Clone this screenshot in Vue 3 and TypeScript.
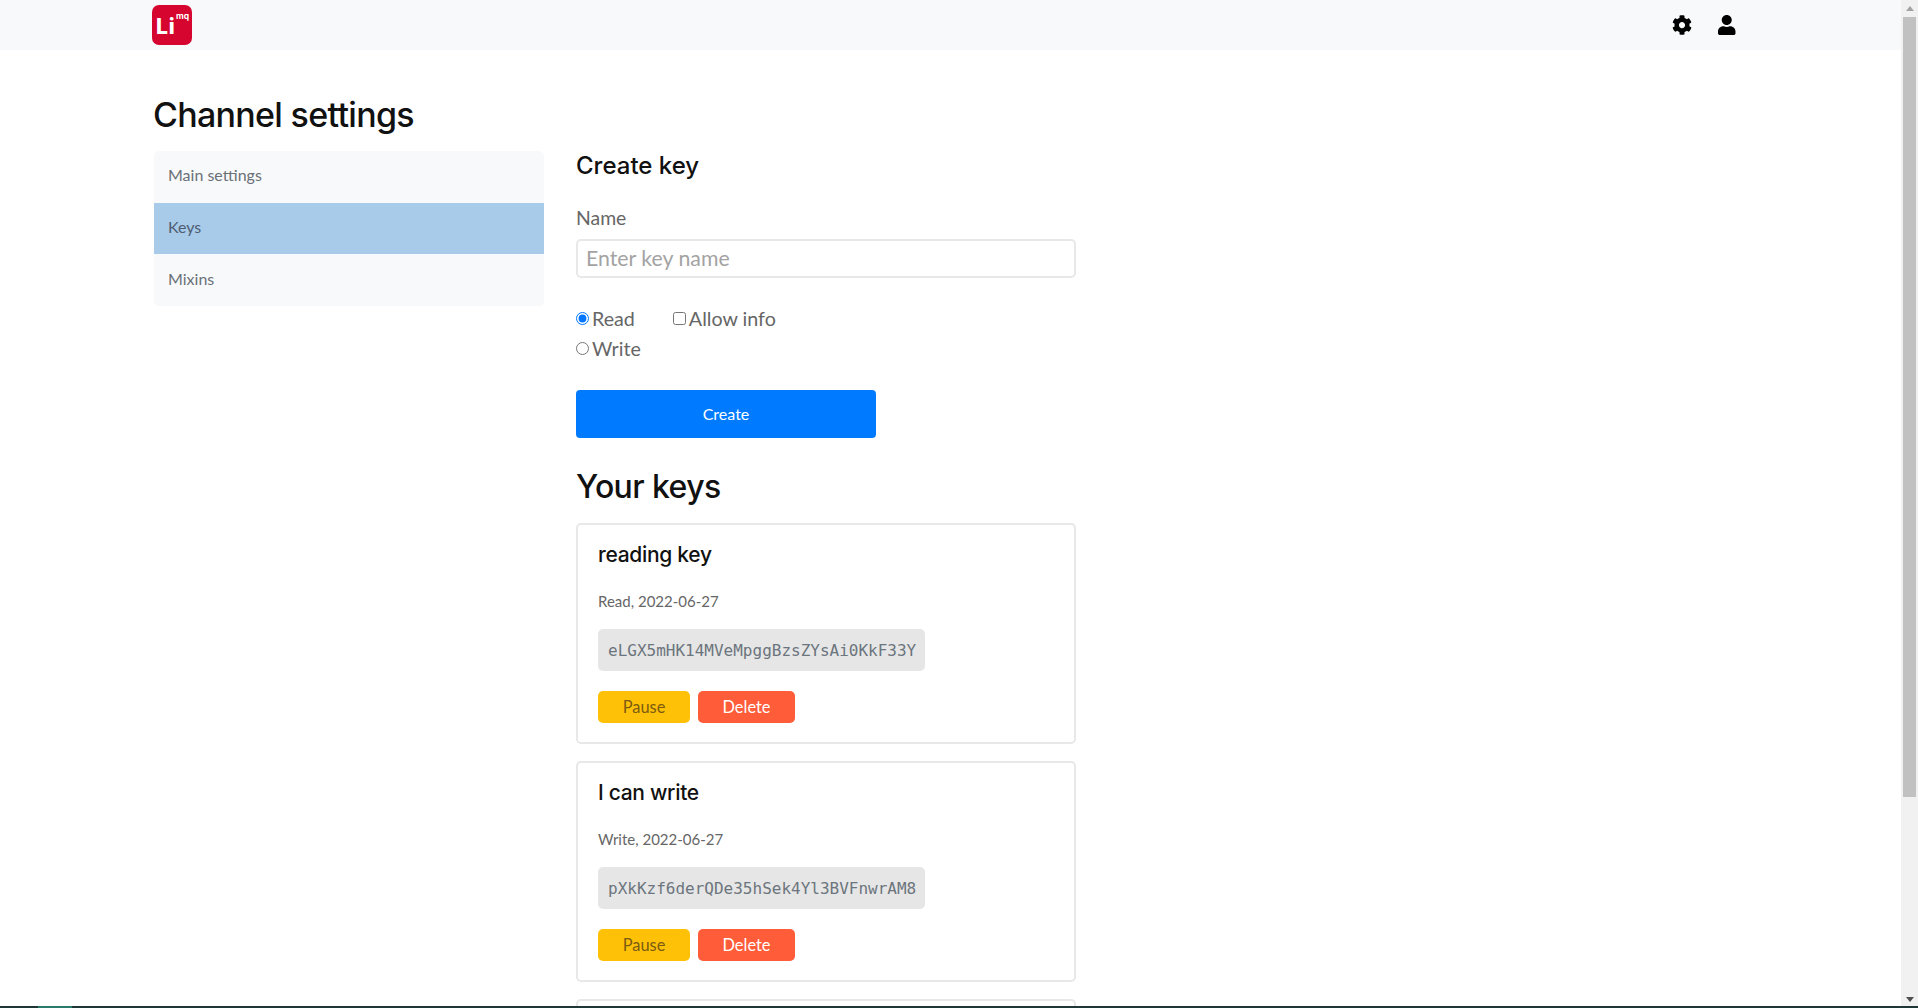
<script setup lang="ts">
interface KeyItem {
  name: string
  meta: string
  token: string
}

const navItems = [
  { label: 'Main settings', active: false },
  { label: 'Keys', active: true },
  { label: 'Mixins', active: false },
]

const keys: KeyItem[] = [
  { name: 'reading key', meta: 'Read, 2022-06-27', token: 'eLGX5mHK14MVeMpggBzsZYsAi0KkF33Y' },
  { name: 'I can write', meta: 'Write, 2022-06-27', token: 'pXkKzf6derQDe35hSek4Yl3BVFnwrAM8' },
]
</script>

<template>
  <div class="window">
    <div class="viewport">
      <div class="page">
        <header class="topbar">
          <svg class="logo" viewBox="0 0 40 40" aria-label="Limq logo">
            <rect width="40" height="40" rx="7" fill="#d6052f" />
            <text x="4" y="29" class="logo-li">Li</text>
            <text x="24" y="14" class="logo-mq">mq</text>
          </svg>
          <div class="top-icons">
            <svg class="gear" viewBox="0 0 512 512" aria-hidden="true">
              <path d="M487.4 315.7l-42.6-24.6c4.3-23.2 4.3-47 0-70.2l42.6-24.6c4.9-2.8 7.1-8.6 5.5-14-11.1-35.6-30-67.8-54.7-94.6-3.8-4.1-10-5.1-14.8-2.3L380.8 110c-17.9-15.4-38.5-27.3-60.8-35.1V25.8c0-5.6-3.9-10.5-9.4-11.7-36.7-8.2-74.3-7.8-109.2 0-5.5 1.2-9.4 6.1-9.4 11.7V75c-22.2 7.9-42.8 19.8-60.8 35.1L88.7 85.5c-4.9-2.8-11-1.9-14.8 2.3-24.7 26.7-43.6 58.9-54.7 94.6-1.7 5.4.6 11.2 5.5 14L67.3 221c-4.3 23.2-4.3 47 0 70.2l-42.6 24.6c-4.9 2.8-7.1 8.6-5.5 14 11.1 35.6 30 67.8 54.7 94.6 3.8 4.1 10 5.1 14.8 2.3l42.6-24.6c17.9 15.4 38.5 27.3 60.8 35.1v49.2c0 5.6 3.9 10.5 9.4 11.7 36.7 8.2 74.3 7.8 109.2 0 5.5-1.2 9.4-6.1 9.4-11.7v-49.2c22.2-7.9 42.8-19.8 60.8-35.1l42.6 24.6c4.9 2.8 11 1.9 14.8-2.3 24.7-26.7 43.6-58.9 54.7-94.6 1.5-5.5-.7-11.3-5.6-14.1zM256 336c-44.1 0-80-35.9-80-80s35.9-80 80-80 80 35.9 80 80-35.9 80-80 80z" />
            </svg>
            <svg class="user" viewBox="0 0 448 512" aria-hidden="true">
              <path d="M224 256c70.7 0 128-57.3 128-128S294.7 0 224 0 96 57.3 96 128s57.3 128 128 128zm89.6 32h-16.7c-22.2 10.2-46.9 16-72.9 16s-50.6-5.8-72.9-16h-16.7C60.2 288 0 348.2 0 422.4V464c0 26.5 21.5 48 48 48h352c26.5 0 48-21.5 48-48v-41.6c0-74.2-60.2-134.4-134.4-134.4z" />
            </svg>
          </div>
        </header>

        <main class="content">
          <h1 class="title">Channel settings</h1>
          <div class="columns">
            <nav class="side">
              <a v-for="item in navItems" :key="item.label" class="side-item" :class="{ active: item.active }">{{ item.label }}</a>
            </nav>
            <section class="form-col">
              <h2 class="create-title">Create key</h2>
              <label class="name-label">Name</label>
              <input class="name-input" type="text" placeholder="Enter key name" />
              <div class="options">
                <div class="option-col">
                  <label class="opt"><input type="radio" name="mode" checked />Read</label>
                  <label class="opt"><input type="radio" name="mode" />Write</label>
                </div>
                <label class="opt"><input type="checkbox" />Allow info</label>
              </div>
              <button class="create-btn" type="button">Create</button>
              <h2 class="keys-title">Your keys</h2>
              <article v-for="k in keys" :key="k.token" class="card">
                <h3 class="card-title">{{ k.name }}</h3>
                <p class="card-meta">{{ k.meta }}</p>
                <code class="token">{{ k.token }}</code>
                <div class="actions">
                  <button class="btn pause" type="button">Pause</button>
                  <button class="btn del" type="button">Delete</button>
                </div>
              </article>
              <article class="card"></article>
            </section>
          </div>
        </main>
      </div>
      <div class="scrollbar" aria-hidden="true">
        <span class="arrow up"></span>
        <div class="track"><div class="thumb"></div></div>
        <span class="arrow down"></span>
      </div>
    </div>
    <div class="strip"><span class="strip-tab"></span></div>
  </div>
</template>

<style>
html,
body {
  margin: 0;
  overflow: hidden;
  background: #fff;
}
</style>

<style scoped>
.window {
  width: 1918px;
  height: 1008px;
  display: flex;
  flex-direction: column;
  overflow: hidden;
  font-family: Lato, "Noto Sans", sans-serif;
  color: #495057;
}
.viewport {
  flex: 1;
  min-height: 0;
  display: flex;
}
.page {
  flex: 1;
  min-width: 0;
  overflow: hidden;
}
.topbar {
  height: 50px;
  background: #f8f9fa;
  display: flex;
  align-items: center;
  justify-content: space-between;
  padding: 0 165.5px 0 152px;
}
.logo {
  width: 40px;
  height: 40px;
}
.logo-li {
  font: 800 21px Inter, sans-serif;
  letter-spacing: 1px;
  fill: #fff;
}
.logo-mq {
  font: 700 8.5px Inter, sans-serif;
  fill: #fff;
}
.top-icons {
  display: flex;
  align-items: center;
  gap: 26px;
}
.gear {
  width: 20px;
  height: 20px;
  display: block;
}
.user {
  width: 17.5px;
  height: 20px;
  display: block;
}
.content {
  padding-left: 154px;
}
.title {
  margin: 0 0 0 -1px;
  padding-top: 42px;
  height: 59px;
  font: 500 34px/46px Inter, sans-serif;
  letter-spacing: -0.7px;
  color: #111;
}
.columns {
  display: flex;
  gap: 32px;
  align-items: flex-start;
}
.side {
  width: 390px;
  flex: none;
  display: flex;
  flex-direction: column;
  border-radius: 5px;
  overflow: hidden;
  background: #f8f9fa;
}
.side-item {
  box-sizing: border-box;
  height: 51.7px;
  display: flex;
  align-items: center;
  padding: 0 0 4px 14px;
  font-size: 16px;
  color: #6a7077;
}
.side-item.active {
  background: #a8cbe9;
  color: #4f5d73;
}
.form-col {
  width: 500px;
  flex: none;
  display: flex;
  flex-direction: column;
  align-items: flex-start;
}
.create-title {
  margin: 0;
  height: 52px;
  font: 500 24px/29px Inter, sans-serif;
  color: #111;
}
.name-label {
  height: 36px;
  font-size: 19.4px;
  line-height: 30px;
  color: #666;
}
.name-input {
  box-sizing: border-box;
  width: 100%;
  height: 39px;
  border: 2px solid #e8e8e8;
  border-radius: 5px;
  padding: 0 8px 2px;
  font-family: inherit;
  font-size: 21.3px;
  outline: none;
}
.name-input::placeholder {
  color: #a3a3a3;
}
.options {
  display: flex;
  gap: 32px;
  margin-top: 25px;
  align-items: flex-start;
}
.option-col {
  display: flex;
  flex-direction: column;
}
.opt {
  height: 30px;
  display: flex;
  align-items: center;
  gap: 3px;
  font-size: 19.7px;
  color: #666;
}
.opt input {
  margin: 1px 0 0;
}
.create-btn {
  width: 300px;
  height: 48px;
  margin-top: 27px;
  padding: 0 0 2px;
  border: 0;
  border-radius: 4px;
  background: #007bff;
  color: #fff;
  font-family: inherit;
  font-size: 16px;
}
.keys-title {
  margin: 0;
  padding-top: 29px;
  height: 56px;
  font: 500 32px/39px Inter, sans-serif;
  letter-spacing: -0.6px;
  color: #111;
  box-sizing: content-box;
}
.card {
  box-sizing: border-box;
  width: 100%;
  height: 221px;
  margin-bottom: 17px;
  border: 2px solid #e8e8e8;
  border-radius: 5px;
  padding: 16px 20px 0;
  flex: none;
}
.card-title {
  margin: 0;
  font: 500 21px/28px Inter, sans-serif;
  letter-spacing: -0.3px;
  color: #111;
}
.card-meta {
  margin: 22px 0 0;
  font-size: 15px;
  line-height: 20px;
  color: #666;
}
.token {
  display: block;
  width: 327px;
  box-sizing: border-box;
  height: 42px;
  margin-top: 18px;
  padding: 0 10px;
  border-radius: 5px;
  background: #e6e6e6;
  color: #6c757d;
  font: 16px/44px "DejaVu Sans Mono", monospace;
}
.actions {
  display: flex;
  gap: 8px;
  margin-top: 20px;
}
.btn {
  height: 32px;
  border: 0;
  border-radius: 5px;
  font-family: inherit;
  font-size: 16.4px;
  padding: 0 0 1px;
}
.pause {
  width: 92px;
  background: #ffc107;
  color: #7a5b10;
}
.del {
  width: 97px;
  background: #ff5c39;
  color: #fff;
}
.scrollbar {
  width: 17px;
  flex: none;
  background: #f1f1f1;
  display: flex;
  flex-direction: column;
  align-items: center;
}
.arrow {
  width: 0;
  height: 0;
  flex: none;
  border-left: 4.5px solid transparent;
  border-right: 4.5px solid transparent;
}
.arrow.up {
  margin: 6px 0;
  border-bottom: 5px solid #a3a3a3;
}
.arrow.down {
  margin: 6px 0 4px;
  border-top: 5px solid #505050;
}
.track {
  flex: 1;
  width: 100%;
  display: flex;
  justify-content: center;
}
.thumb {
  width: 13px;
  height: 780px;
  background: #c1c1c1;
}
.strip {
  height: 2px;
  flex: none;
  background: #1f3835;
  padding-left: 38px;
}
.strip-tab {
  display: block;
  width: 34px;
  height: 2px;
  background: #2a7a6b;
}
</style>
